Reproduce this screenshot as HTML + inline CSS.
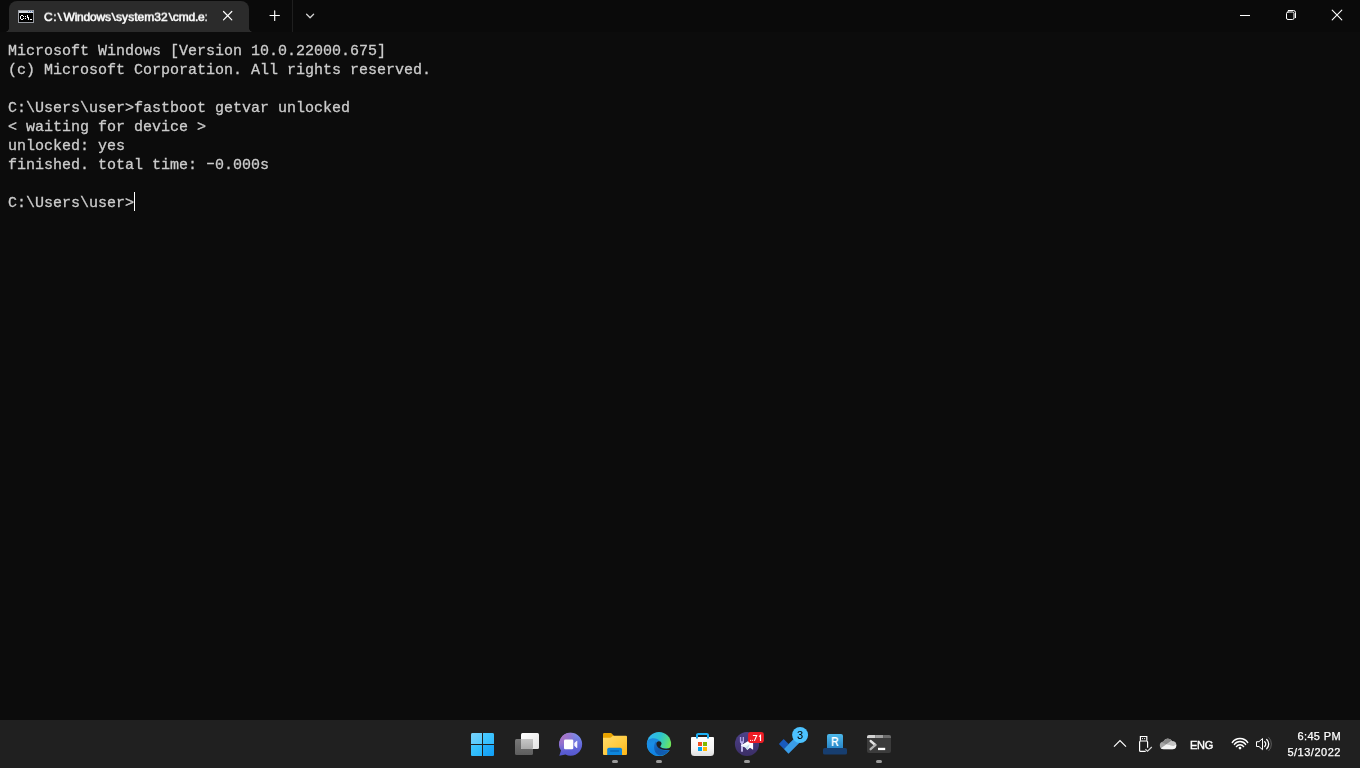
<!DOCTYPE html>
<html><head><meta charset="utf-8">
<style>
*{margin:0;padding:0;box-sizing:border-box}
html,body{width:1360px;height:768px;overflow:hidden;background:#0c0c0c}
body{position:relative;font-family:"Liberation Sans",sans-serif;color:#fff}
#titlebar{position:absolute;left:0;top:0;width:1360px;height:32px;background:#0a0a0a}
#tab{position:absolute;left:9px;top:1px;width:240px;height:31px;background:#2b2b2b;border-radius:8px 8px 0 0}
#tab:before,#tab:after{content:"";position:absolute;bottom:0;width:4px;height:4px}
#tab:before{left:-4px;background:radial-gradient(circle at 0 0,transparent 3.6px,#2b2b2b 4.2px)}
#tab:after{right:-4px;background:radial-gradient(circle at 100% 0,transparent 3.6px,#2b2b2b 4.2px)}
.bs{display:inline-block;transform:scaleX(1.5);margin:0 .8px;-webkit-text-stroke:.15px #fff}
#tabtitle{will-change:transform;transform:scaleY(.93);transform-origin:0 11px;-webkit-text-stroke:0.55px #fff;position:absolute;left:44px;top:10px;font-size:12px;line-height:14px;color:#fff;white-space:nowrap;width:165px;overflow:hidden}
#term{will-change:transform;position:absolute;left:8px;top:42px;-webkit-text-stroke:0.3px #ccc;font-family:"Liberation Mono",monospace;font-size:15px;line-height:19px;color:#cccccc;white-space:pre}
#cursor{position:absolute;left:134px;top:192px;width:1px;height:19px;background:#fff}
#taskbar{position:absolute;left:0;top:720px;width:1360px;height:48px;background:#202020}
.abs{position:absolute}
.tt{position:absolute;white-space:nowrap;will-change:transform}
</style></head><body>
<div id="titlebar">
  <div id="tab"></div>
<svg class="abs" style="left:0;top:0" width="1360" height="32" viewBox="0 0 1360 32">
  <g shape-rendering="crispEdges">
    <rect x="18" y="10" width="16" height="13" fill="#9a9da4"/>
    <rect x="19" y="11" width="14" height="2" fill="#d3d8e0"/>
    <rect x="19" y="13" width="14" height="9" fill="#000"/>
    <g fill="#5a7bb0"><rect x="28" y="11" width="1" height="1"/><rect x="30" y="11" width="1" height="1"/><rect x="32" y="11" width="1" height="1"/></g>
    <g fill="#fff"><rect x="21" y="15" width="1" height="1"/><rect x="22" y="15" width="1" height="1"/><rect x="20" y="16" width="1" height="1"/><rect x="20" y="17" width="1" height="1"/><rect x="20" y="18" width="1" height="1"/><rect x="23" y="16" width="1" height="1"/><rect x="23" y="18" width="1" height="1"/><rect x="21" y="19" width="1" height="1"/><rect x="22" y="19" width="1" height="1"/><rect x="25" y="16" width="1" height="1"/><rect x="25" y="18" width="1" height="1"/><rect x="27" y="15" width="1" height="1"/><rect x="27" y="16" width="1" height="1"/><rect x="27" y="17" width="1" height="1"/><rect x="28" y="17" width="1" height="1"/><rect x="28" y="18" width="1" height="1"/><rect x="28" y="19" width="1" height="1"/><rect x="30" y="19" width="1" height="1"/><rect x="31" y="19" width="1" height="1"/></g>
  </g>
  <g stroke="#fff" stroke-width="1" fill="none" stroke-linecap="round">
    <path d="M223.5 11.5l8.3 8.3M231.800 11.5l-8.3 8.3" stroke-width="1.2"/>
    <path d="M270 15.5h9.4M274.7 10.8v9.7" stroke-width="1.15"/>
    <path d="M306.6 14.200l3.5 3.5l3.5-3.5" stroke="#d2d2d2" stroke-width="1.3" stroke-linejoin="round"/>
    <path d="M1240 15.5h10" stroke-linecap="butt"/>
    <path d="M1332.2 10.2l9.6 9.6M1341.8 10.2l-9.6 9.6" stroke-width="1.1"/>
    <rect x="1286.5" y="12" width="7.5" height="7.5" rx="1.5"/>
    <path d="M1288.3 10.5h5.2a2 2 0 0 1 2 2v5.2"/>
  </g>
  <rect x="292" y="0" width="1" height="32" fill="#1f1f1f"/>
</svg>
  <div id="tabtitle"><span style="letter-spacing:.6px">C:</span><span class="bs">\</span><span style="margin-left:1.4px;letter-spacing:-.2px">Windows</span><span class="bs">\</span><span style="letter-spacing:.04px;margin-left:.3px">system32</span><span class="bs">\</span><span style="letter-spacing:-.2px;margin-left:.2px">cmd.e</span><span style="opacity:.8">:</span></div>
</div>
<div id="term">Microsoft Windows [Version 10.0.22000.675]
(c) Microsoft Corporation. All rights reserved.

C:\Users\user&gt;fastboot getvar unlocked
&lt; waiting for device &gt;
unlocked: yes
finished. total time: <span style="position:relative;top:-1.7px">–</span>0.000s

C:\Users\user&gt;</div>
<div id="cursor"></div>
<div id="taskbar"></div>
<!--TB--><svg class="abs" style="left:0;top:720px" width="1360" height="48" viewBox="0 720 1360 48">
<defs>
  <linearGradient id="gw" x1="0" y1="0" x2="1" y2="1"><stop offset="0" stop-color="#7fd4fb"/><stop offset=".45" stop-color="#3cc4ff"/><stop offset="1" stop-color="#0f9bf5"/></linearGradient>
  <linearGradient id="gtv1" x1="0" y1="0" x2="1" y2="1"><stop offset="0" stop-color="#ffffff"/><stop offset="1" stop-color="#e2e2e2"/></linearGradient>
  <linearGradient id="gtv2" x1="0" y1="0" x2="0" y2="1"><stop offset="0" stop-color="#787878"/><stop offset="1" stop-color="#5e5e5e"/></linearGradient>
  <linearGradient id="gtv3" x1="0" y1="0" x2="0" y2="1"><stop offset="0" stop-color="#c6c6c6"/><stop offset="1" stop-color="#aaaaaa"/></linearGradient>
  <linearGradient id="gchat" x1="0" y1="0" x2="0" y2="1"><stop offset="0" stop-color="#7f97ee"/><stop offset=".55" stop-color="#6468da"/><stop offset="1" stop-color="#5557cf"/></linearGradient>
  <radialGradient id="gchat2" gradientUnits="userSpaceOnUse" cx="561" cy="735" r="17"><stop offset="0" stop-color="#b074c0" stop-opacity="1"/><stop offset=".5" stop-color="#a070c8" stop-opacity=".75"/><stop offset="1" stop-color="#8a70d0" stop-opacity="0"/></radialGradient>
  <linearGradient id="gfold" x1="0" y1="0" x2="1" y2="1"><stop offset="0" stop-color="#ffdc6b"/><stop offset=".6" stop-color="#ffc93c"/><stop offset="1" stop-color="#fdb515"/></linearGradient>
  <linearGradient id="gedge1" gradientUnits="userSpaceOnUse" x1="6" y1="6" x2="27" y2="14"><stop offset="0" stop-color="#31b6f0"/><stop offset=".45" stop-color="#2cc3cf"/><stop offset=".8" stop-color="#4fd98c"/><stop offset="1" stop-color="#70e458"/></linearGradient>
  <linearGradient id="gedge2" gradientUnits="userSpaceOnUse" x1="8" y1="9" x2="12" y2="27"><stop offset="0" stop-color="#1b86d8"/><stop offset=".3" stop-color="#1a8fe6"/><stop offset="1" stop-color="#0d7fe4"/></linearGradient>
  <linearGradient id="gedge3" gradientUnits="userSpaceOnUse" x1="12" y1="13" x2="22" y2="26"><stop offset="0" stop-color="#176fc8"/><stop offset=".5" stop-color="#1259ac"/><stop offset="1" stop-color="#0f5fb4"/></linearGradient>
  <clipPath id="cedge"><circle cx="15" cy="15" r="12.1"/></clipPath>
  <linearGradient id="gstore" x1="0" y1="0" x2="0" y2="1"><stop offset="0" stop-color="#ffffff"/><stop offset=".6" stop-color="#f6f6f6"/><stop offset="1" stop-color="#dedede"/></linearGradient>
  <linearGradient id="guni" x1="0" y1="0" x2="0" y2="1"><stop offset="0" stop-color="#4d4188"/><stop offset="1" stop-color="#3b2e66"/></linearGradient>
  <linearGradient id="gR" x1="0" y1="0" x2="0" y2="1"><stop offset="0" stop-color="#4db8ea"/><stop offset="1" stop-color="#2886c8"/></linearGradient>
  <clipPath id="cterm"><rect x="867" y="735" width="24" height="18" rx="2"/></clipPath>
</defs>
<!-- start -->
<g>
  <path d="M471 734.5a1.5 1.5 0 0 1 1.500-1.500H482v11H471z" fill="#6fd0fb"/>
  <path d="M483 733h9.500a1.500 1.500 0 0 1 1.500 1.500V744H483z" fill="#3fc5ff"/>
  <path d="M471 745h11v11h-9.500a1.500 1.500 0 0 1 -1.500-1.500z" fill="#2cbcfb"/>
  <path d="M483 745h11v9.500a1.500 1.500 0 0 1 -1.500 1.500H483z" fill="#12a2f6"/>
  <rect x="471" y="733" width="23" height="23" rx="1.500" fill="url(#gw)" opacity=".55"/>
  <rect x="482" y="733" width="1" height="23" fill="#202020"/><rect x="471" y="744" width="23" height="1" fill="#202020"/>
</g>
<!-- task view -->
<rect x="515" y="739" width="18" height="16" rx="1.500" fill="url(#gtv2)"/>
<rect x="521" y="733" width="18" height="16" rx="1.500" fill="url(#gtv1)"/>
<path d="M521 739h12v8.500a1.500 1.500 0 0 1 -1.500 1.500H522.500a1.500 1.500 0 0 1 -1.500-1.500z" fill="url(#gtv3)"/>
<!-- chat -->
<g transform="translate(0 .4)">
  <path id="chatp" d="M570.700 732.300a11.500 11.500 0 1 1 -5.200 21.760L559.300 755.400l1.700-5.300A11.500 11.500 0 0 1 570.700 732.300z" fill="url(#gchat)"/>
  <path d="M570.700 732.300a11.500 11.500 0 1 1 -5.200 21.760L559.300 755.400l1.700-5.300A11.500 11.500 0 0 1 570.700 732.300z" fill="url(#gchat2)"/>
  <rect x="564" y="739.200" width="9.300" height="9.600" rx="1.300" fill="#fff"/>
  <path d="M574.300 742.600l2.300-2.100a.4 .4 0 0 1 .7 .3v6.400a.4 .4 0 0 1 -.7 .3l-2.300-2.100z" fill="#f4f2ff"/>
</g>
<!-- explorer -->
<g>
  <path d="M603 734.200a1.200 1.200 0 0 1 1.200-1.200h6.600a1.200 1.200 0 0 1 .9 .4l2.300 2.600V739H603z" fill="#e8a300"/>
  <path d="M603 737.800h7.200a1.500 1.500 0 0 0 1.100-.5l1.300-1.300a1 1 0 0 1 .7-.3H626a1 1 0 0 1 1 1V754a1 1 0 0 1 -1 1H604a1 1 0 0 1 -1-1z" fill="url(#gfold)"/>
  <path d="M607.200 755v-5.500a1.700 1.700 0 0 1 1.700-1.700h11.400a1.700 1.700 0 0 1 1.700 1.700V755z" fill="#0d86dc"/>
  <rect x="610" y="750.300" width="9.300" height="1.400" rx=".7" fill="#0a66b4"/>
</g>
<!-- edge -->
<g transform="translate(644 729)">
  <g clip-path="url(#cedge)">
    <rect x="0" y="0" width="30" height="30" fill="url(#gedge1)"/>
    <path d="M0 14.500C3 12 4.500 9.600 8.500 9.200C11.500 9 14.500 9.800 16.300 12.200L17.400 14.500L16.200 17.600L18.500 19.200L30 19.600V30H0z" fill="url(#gedge2)"/>
    <path d="M11.600 12.600C10.200 14.800 9.700 17.800 10.400 20.800C11.200 24 13 26 16 26.400C20 26.900 23.800 25 26.200 21L21.500 21.400L18 21L15.500 19.600L13.500 18L12.500 15.300L12.800 13.200z" fill="url(#gedge3)"/>
  </g>
  <path d="M14.900 12.200C13.200 12.200 12.200 13.700 12.400 15.300C12.600 17.100 13.800 18.500 15.500 19.500C18 20.900 21.500 21.300 25.800 20.900L27.500 20.600L27.500 16.800C26.800 17.900 26 18.700 24.800 19.200C23 19.900 20.200 19.700 18.100 18.900C16.800 18.400 16 17.800 16.300 17.200C16.900 16.200 17.600 15.300 17.500 14.200C17.400 13.100 16.400 12.200 14.900 12.200z" fill="#202020"/>
</g>
<!-- store -->
<g>
  <path d="M697 738.500V735.200a1.300 1.300 0 0 1 1.300-1.300h8.400a1.300 1.300 0 0 1 1.300 1.300V738.500" fill="none" stroke="#1cb2f8" stroke-width="2"/>
  <path d="M691 738a1 1 0 0 1 1-1H713a1 1 0 0 1 1 1V752.500a3.500 3.500 0 0 1 -3.500 3.500H694.500a3.500 3.500 0 0 1 -3.500-3.500z" fill="url(#gstore)"/>
  <path d="M696 737v1.500h2V737zM707 737v1.500h2V737z" fill="#18a0e8"/>
  <rect x="698" y="742" width="4" height="4" fill="#f25022"/><rect x="703" y="742" width="4" height="4" fill="#7fba00"/>
  <rect x="698" y="747" width="4" height="4" fill="#00a4ef"/><rect x="703" y="747" width="4" height="4" fill="#ffb900"/>
</g>
<!-- unigram-like -->
<g>
  <circle cx="747" cy="744" r="12.100" fill="url(#guni)"/>
  <path d="M740.550 737.100v4.300a1.400 1.400 0 0 0 2.800 0V737.100" fill="none" stroke="#b3a8e8" stroke-width="1.350"/>
  <rect x="740.300" y="741.200" width="3.300" height="1.900" rx=".8" fill="#b3a8e8"/>
  <rect x="741.100" y="742.500" width="1.800" height="9.200" rx=".5" fill="#cbc2f3"/>
  <path d="M740.800 745.500L748.300 741L753.100 741.800V749.700L750 747.800L747.300 749.900L745.400 747.600z" fill="#ffffff"/>
  <path d="M741 745.500L749.800 744.200L745.400 747.600z" fill="#e9f2f9"/>
  <path d="M745.400 747.600L749.800 744.200L747.300 749.900z" fill="#c2dbeb"/>
  <rect x="748.100" y="732" width="15.800" height="10.900" rx="2.700" fill="#ee1c25"/>
  <g fill="#fff"><rect x="750" y="739.900" width="1" height="1"/><rect x="751.900" y="739.900" width="1" height="1"/></g>
  <path d="M752.900 735.500h3.800L754.400 740.900" fill="none" stroke="#fff" stroke-width="1.100" stroke-linejoin="miter"/>
  <path d="M759.100 736.600L760.500 735.300V741" fill="none" stroke="#fff" stroke-width="1.150"/>
</g>
<!-- todo -->
<g>
  <path d="M783.600 739.100L778.900 743.900L783.900 748.900L788.600 744.100z" fill="#195abd"/>
  <path d="M783.900 748.900L788.500 753.700L800.500 741.700L795.800 737L788.600 744.100z" fill="#3a9de8"/>
  <circle cx="800.100" cy="735" r="8" fill="#4cc2ff"/>
</g>
<!-- R -->
<g>
  <path d="M827 736a2 2 0 0 1 2-2h12a2 2 0 0 1 2 2v12.500h-16z" fill="url(#gR)"/>
  <rect x="823" y="748" width="24" height="6.400" rx="1.500" fill="#173e70"/>
</g>
<!-- terminal -->
<g>
  <g clip-path="url(#cterm)">
    <rect x="867" y="735" width="24" height="18" fill="#3b3b3b"/>
    <rect x="867" y="735" width="8.200" height="3" fill="#d2d2d2"/><rect x="875.200" y="735" width="8" height="3" fill="#a2a2a2"/><rect x="883.200" y="735" width="8" height="3" fill="#6c6c6c"/>
  </g>
  <path d="M870.600 741l4.700 4" stroke="#e4e4e4" stroke-width="2.300" stroke-linecap="round" fill="none"/>
  <path d="M875.300 745l-4.700 4.200" stroke="#b4b4b4" stroke-width="2.300" stroke-linecap="round" fill="none"/>
  <rect x="878" y="747.800" width="7.200" height="2.300" fill="#fff"/>
</g>
<!-- pills -->
<g fill="#9b9b9b">
  <rect x="612" y="760" width="6" height="3" rx="1.500"/><rect x="656" y="760" width="6" height="3" rx="1.500"/>
  <rect x="744" y="760" width="6" height="3" rx="1.500"/><rect x="876" y="760" width="6" height="3" rx="1.500"/>
</g>
<!-- tray -->
<g fill="none" stroke="#fff" stroke-width="1.100">
  <path d="M1114 746.700l6-6l6 6" stroke-width="1.200"/>
  <path d="M1140.400 740.800v-4.300h6.400v4.300" stroke-width="1.200"/>
  <path d="M1147.600 747.700V742a1 1 0 0 0 -1-1h-6a1 1 0 0 0 -1 1v8.400a1 1 0 0 0 1 1h5.100" stroke-width="1.200"/>
  <path d="M1145.400 749.200l2.100 1.900l4.300-4.100" stroke="#d4d4d4" stroke-width="1.200"/>
  <circle cx="1142.500" cy="738.600" r=".6" fill="#fff" stroke="none"/><circle cx="1144.600" cy="738.600" r=".6" fill="#fff" stroke="none"/>
</g>
<g>
  <clipPath id="ccloud"><circle cx="1167.800" cy="743.700" r="5.100"/><circle cx="1163.700" cy="745.300" r="3.900"/><circle cx="1172.300" cy="745.200" r="4"/><rect x="1163.700" y="745" width="8.600" height="4.200"/></clipPath>
  <g clip-path="url(#ccloud)">
    <rect x="1159" y="738" width="18" height="12" fill="#a6a6a6"/>
    <path d="M1162 742.500L1167 738L1173 739.500L1166.500 744.200z" fill="#8a8a8a"/>
    <path d="M1166.500 744.200L1173 739.500L1177 743.500L1173.500 746z" fill="#c4c4c4"/>
    <path d="M1159 749.500L1166.500 744.200L1173.500 746L1177 743.800V750z" fill="#f4f4f4"/>
  </g>
</g>
<g fill="none" stroke="#fff" stroke-width="1.450" stroke-linecap="round">
  <circle cx="1240" cy="748.100" r="1.400" fill="#fff" stroke="none"/>
  <path d="M1236.400 746.600a4.300 4.300 0 0 1 7.200 0"/>
  <path d="M1234.400 744.450a6.860 6.860 0 0 1 11.200 0"/>
  <path d="M1232.300 742.500a9.550 9.550 0 0 1 15.400 0"/>
</g>
<g fill="none" stroke="#fff" stroke-width="1" stroke-linejoin="round">
  <path d="M1256.500 741.700h2.500l3.500-3.200v11.200l-3.500-3.200h-2.500z"/>
  <path d="M1264.700 741.700a3.300 3.300 0 0 1 0 4.800" stroke-linecap="round" stroke-width="1.300"/>
  <path d="M1266.700 739.500a6.300 6.300 0 0 1 0 9.200" stroke-linecap="round" stroke-width="1.300"/>
  <path d="M1268.800 737.500a9.300 9.300 0 0 1 0 13.200" stroke="#5e5e5e" stroke-linecap="round"/>
</g>
</svg>

<div class="tt" style="left:792px;top:728px;width:16px;text-align:center;font-size:11px;line-height:14px;color:#000">3</div>
<div class="tt" style="left:827px;top:735px;width:16px;text-align:center;font-size:12.5px;line-height:14px;color:#fff;font-weight:bold;transform:scaleX(.84)">R</div>
<div class="tt" style="left:1189.8px;top:738px;font-size:11px;line-height:14px;color:#fff;letter-spacing:-.3px;-webkit-text-stroke:.42px #fff">ENG</div>
<div class="tt" style="left:1240.8px;top:729px;width:100px;text-align:right;font-size:11px;line-height:14px;color:#fff;letter-spacing:.36px;-webkit-text-stroke:.25px #fff">6:45 PM</div>
<div class="tt" style="left:1240.9px;top:745px;width:100px;text-align:right;font-size:11px;line-height:14px;color:#fff;letter-spacing:.52px;-webkit-text-stroke:.25px #fff">5/13/2022</div>
<!--/TB-->
</body></html>
